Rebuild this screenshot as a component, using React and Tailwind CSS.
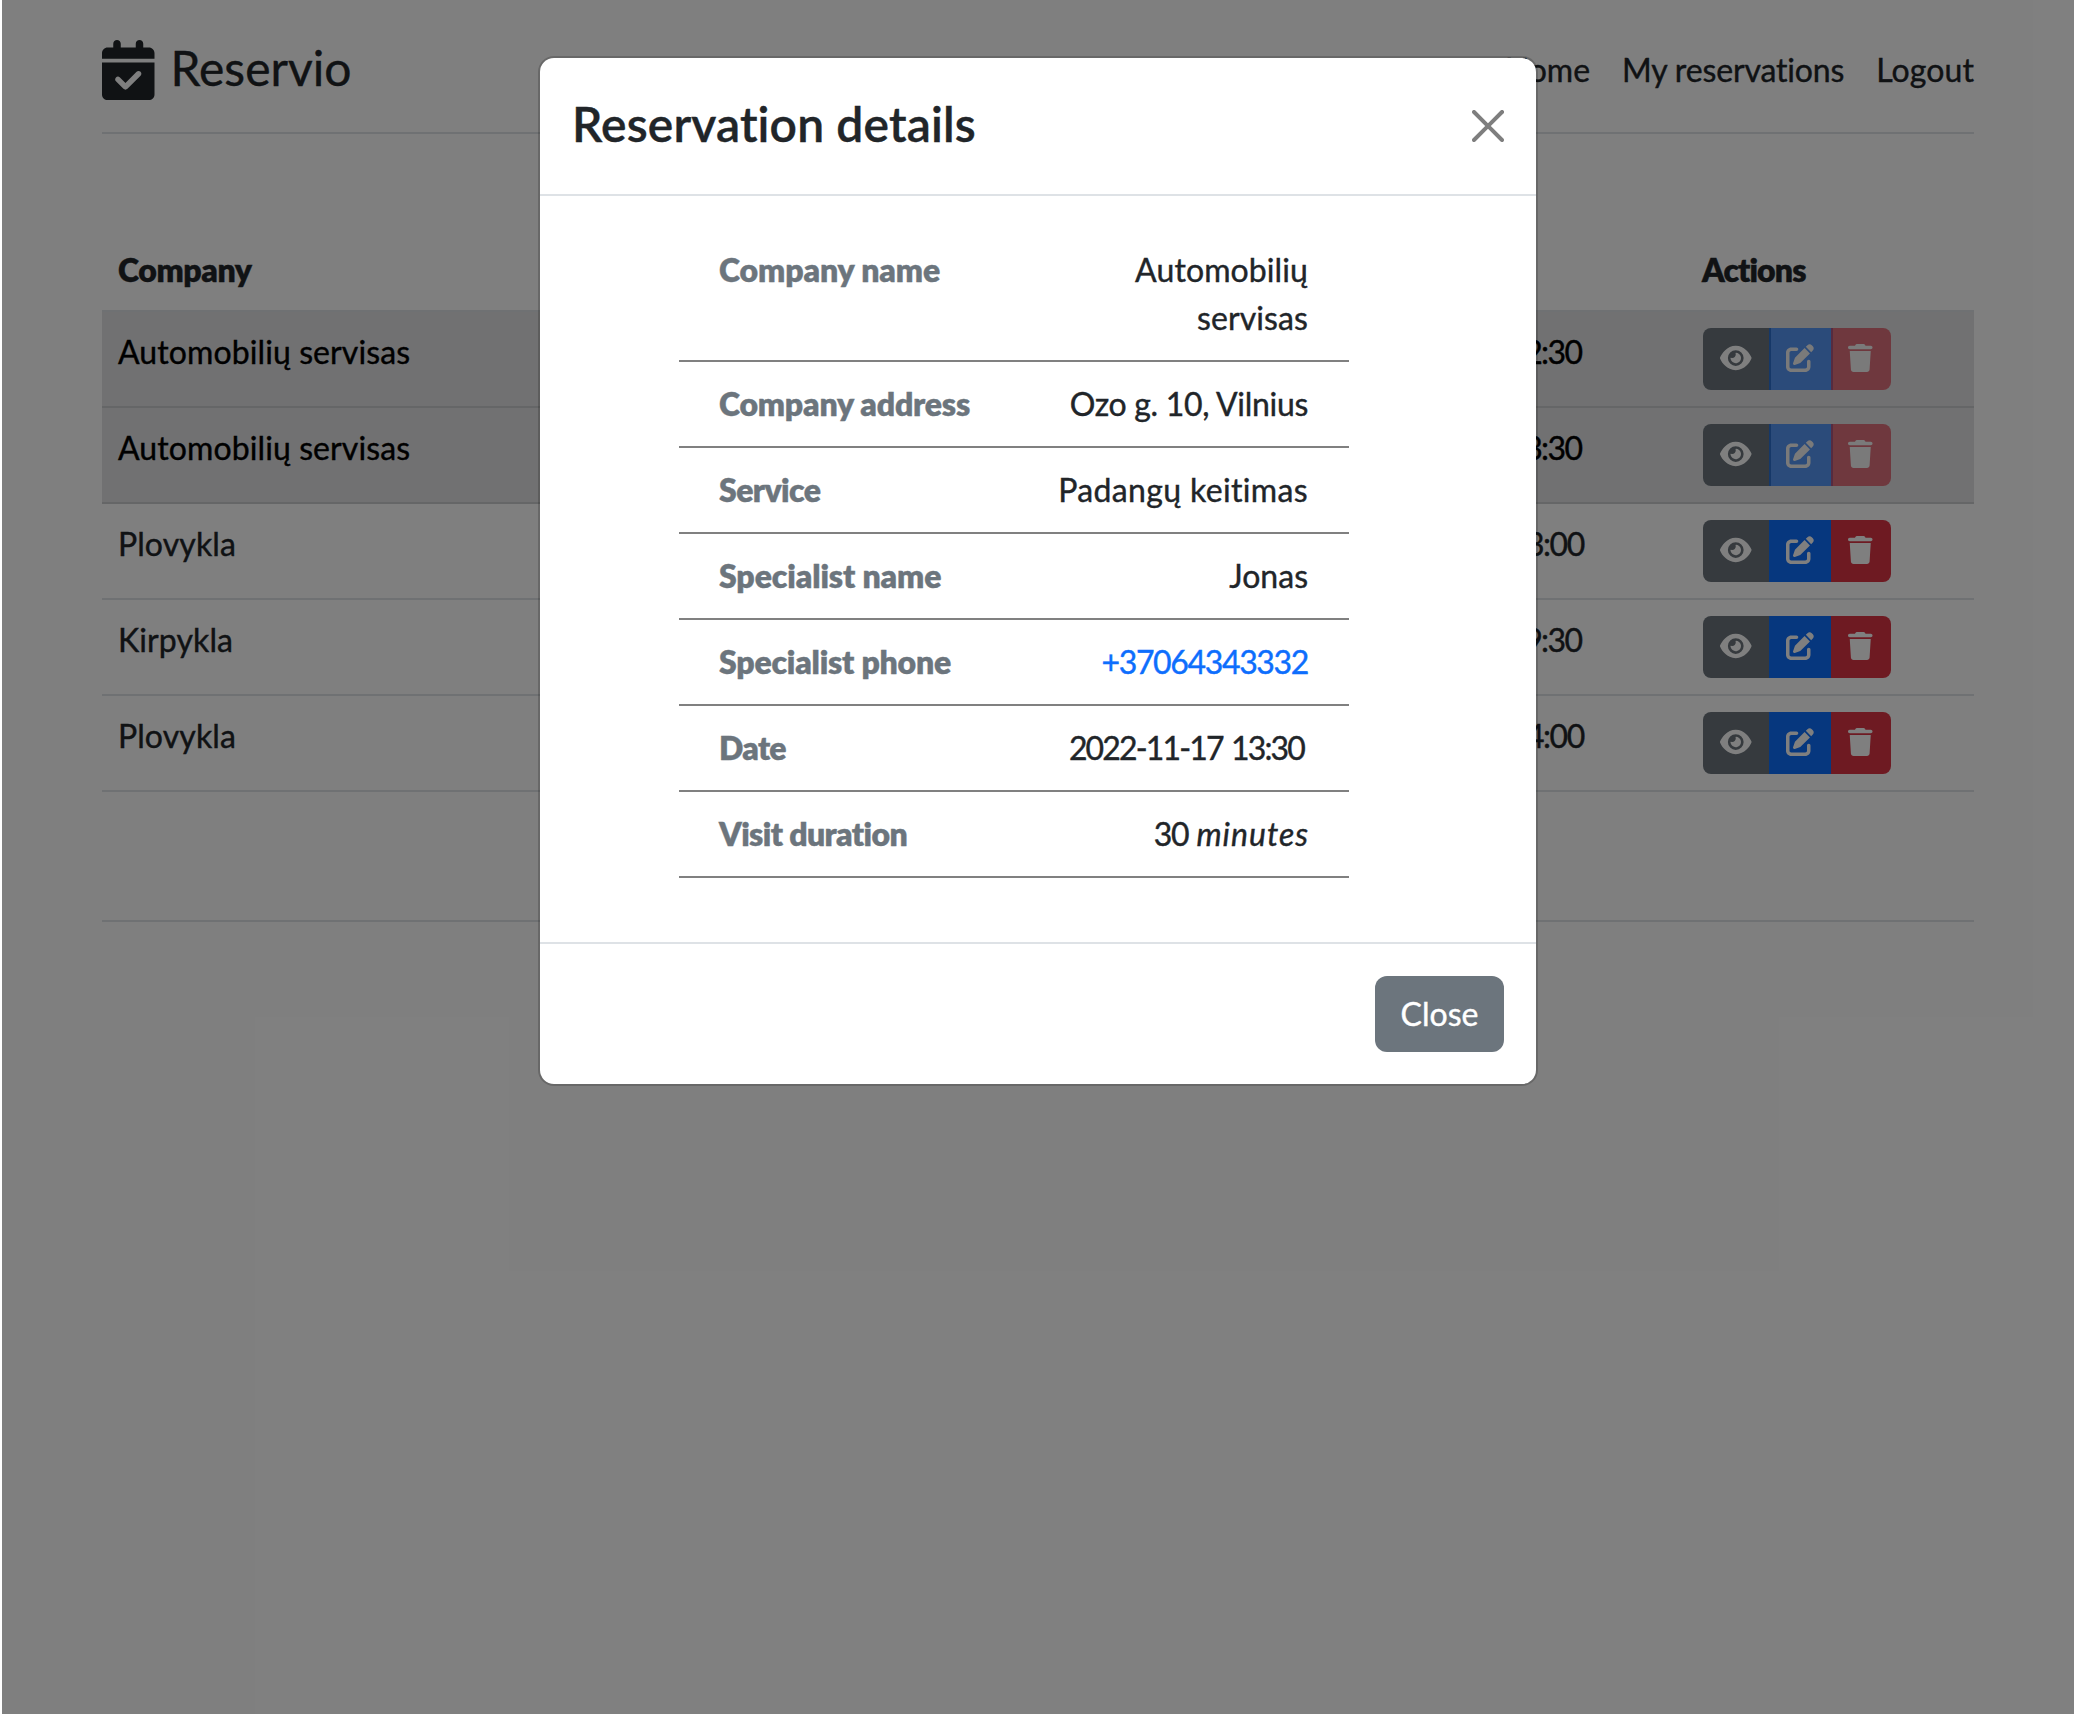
import React from "react";
import { FaCalendarCheck, FaEye, FaPenToSquare, FaTrash } from "react-icons/fa6";

const reservations = [
  { company: "Automobilių servisas", date: "2022-11-17 12:30", past: true, spacing: "tracking-[-1.65px]" },
  { company: "Automobilių servisas", date: "2022-11-17 13:30", past: true, spacing: "tracking-[-1.65px]" },
  { company: "Plovykla", date: "2022-11-28 13:00", spacing: "tracking-[-1.5px]" },
  { company: "Kirpykla", date: "2022-11-29 09:30", spacing: "tracking-[-1.65px]" },
  { company: "Plovykla", date: "2022-11-30 14:00", spacing: "tracking-[-1.5px]" },
];

const details = [
  {
    label: "Company name",
    spacing: "tracking-[-0.1px]",
    value: <span className="tracking-[0.1px]">Automobilių servisas</span>,
  },
  {
    label: "Company address",
    spacing: "tracking-[-0.2px]",
    value: <span className="tracking-[-0.3px]">Ozo g. 10, Vilnius</span>,
  },
  {
    label: "Service",
    spacing: "tracking-[-0.6px]",
    value: <span className="tracking-[0.35px]">Padangų keitimas</span>,
  },
  { label: "Specialist name", spacing: "tracking-[-0.1px]", value: "Jonas" },
  {
    label: "Specialist phone",
    spacing: "tracking-[-0.2px]",
    value: <span className="tracking-[-1.35px] text-[#0d6efd]">+37064343332</span>,
  },
  {
    label: "Date",
    spacing: "tracking-[-0.7px]",
    value: <span className="mr-1 tracking-[-1.85px] [word-spacing:2px]">2022-11-17 13:30</span>,
  },
  {
    label: "Visit duration",
    spacing: "tracking-[-0.6px]",
    value: (
      <span className="whitespace-nowrap">
        <span className="tracking-[-1.2px] [word-spacing:1px]">30 </span>
        <em className="-mr-px tracking-[1px]">minutes</em>
      </span>
    ),
  },
];

function Actions({ disabled }) {
  const fade = disabled ? "opacity-65" : "";
  return (
    <div className="flex h-[62px] text-white">
      <button className="flex items-center rounded-l-lg bg-[#6c757d] pr-[19px] pb-0.5 pl-[17px]">
        <FaEye className="h-7 w-[31.5px]" />
      </button>
      <button className={`-ml-0.5 flex items-center bg-[#0d6efd] pr-[18.5px] pb-0.5 pl-[17.5px] ${fade}`}>
        <FaPenToSquare className="size-7" />
      </button>
      <button className={`-ml-0.5 flex items-center rounded-r-lg bg-[#dc3545] pr-[18.5px] pb-0.5 pl-[17.5px] ${fade}`}>
        <FaTrash className="h-7 w-[24.5px]" />
      </button>
    </div>
  );
}

function Page() {
  return (
    <div className="ml-0.5 h-full bg-white px-[100px]">
      <header className="flex h-[134px] items-start justify-between border-b-2 border-[#dee2e6] pt-8">
        <div className="flex items-start gap-4">
          <FaCalendarCheck className="mt-2 h-[60px] w-[52.5px]" />
          <span className="text-[48px] leading-[72px]">Reservio</span>
        </div>
        <nav className="flex gap-8 pt-[14px]">
          <a>Home</a>
          <a className="tracking-[-0.15px]">My reservations</a>
          <a className="tracking-[0.1px]">Logout</a>
        </nav>
      </header>
      <main className="mt-24">
        <div className="flex h-[82px] border-b-2 border-[#dee2e6] pt-4 font-extrabold">
          <div className="w-[1243px] pl-4 tracking-[-0.4px]">Company</div>
          <div className="w-[341px]" />
          <div className="pl-4 tracking-[-0.9px]">Actions</div>
        </div>
        {reservations.map((r, i) => (
          <div
            key={i}
            className={
              r.past
                ? "flex h-24 border-b-2 border-[#cbccce] bg-[#e2e3e5] pt-4 text-black"
                : "flex h-24 border-b-2 border-[#dee2e6] pt-4"
            }
          >
            <div className="w-[1227px] pl-4 tracking-[0.1px]">{r.company}</div>
            <div className={`w-[357px] pl-4 ${r.spacing}`}>{r.date}</div>
            <div className="pl-[17px]">
              <Actions disabled={r.past} />
            </div>
          </div>
        ))}
      </main>
      <div className="mt-32 h-0.5 bg-[#dee2e6]" />
    </div>
  );
}

function Modal() {
  return (
    <div className="h-[1030px] w-[1000px] rounded-2xl border-2 border-black/[0.175] bg-white bg-clip-padding">
      <div className="flex h-[138px] items-center justify-between border-b-2 border-[#dee2e6] px-8">
        <h1 className="pb-1 text-[48px] leading-[72px] font-semibold tracking-[0.15px]">Reservation details</h1>
        <svg viewBox="0 0 16 16" className="size-8 opacity-50" fill="#000">
          <path d="M.293.293a1 1 0 0 1 1.414 0L8 6.586 14.293.293a1 1 0 1 1 1.414 1.414L9.414 8l6.293 6.293a1 1 0 0 1-1.414 1.414L8 9.414l-6.293 6.293a1 1 0 0 1-1.414-1.414L6.586 8 .293 1.707a1 1 0 0 1 0-1.414z" />
        </svg>
      </div>
      <div className="h-[746px] pt-8 pl-[139px]">
        <dl className="w-[670px]">
          {details.map((d) => (
            <div key={d.label} className="flex justify-between border-b-2 border-[#808080] py-[18px] pr-[41px] pl-10">
              <dt className={`font-extrabold text-[#6c757d] ${d.spacing}`}>{d.label}</dt>
              <dd className="max-w-[260px] text-right">{d.value}</dd>
            </div>
          ))}
        </dl>
      </div>
      <div className="flex h-[142px] items-start justify-end border-t-2 border-[#dee2e6] pt-8 pr-8">
        <button className="flex h-[76px] w-[129px] items-center justify-center rounded-xl bg-[#6c757d] text-white">
          Close
        </button>
      </div>
    </div>
  );
}

export default function App() {
  return (
    <div className="relative h-[1714px] w-[2074px] overflow-hidden bg-white font-['Lato',sans-serif] text-[32px] leading-[48px] text-[#212529] [-webkit-text-stroke:0.4px] [font-variant-ligatures:none]">
      <Page />
      <div className="absolute inset-y-0 right-0 left-0.5 bg-black/50" />
      <div className="absolute top-14 left-[538px]">
        <Modal />
      </div>
    </div>
  );
}
